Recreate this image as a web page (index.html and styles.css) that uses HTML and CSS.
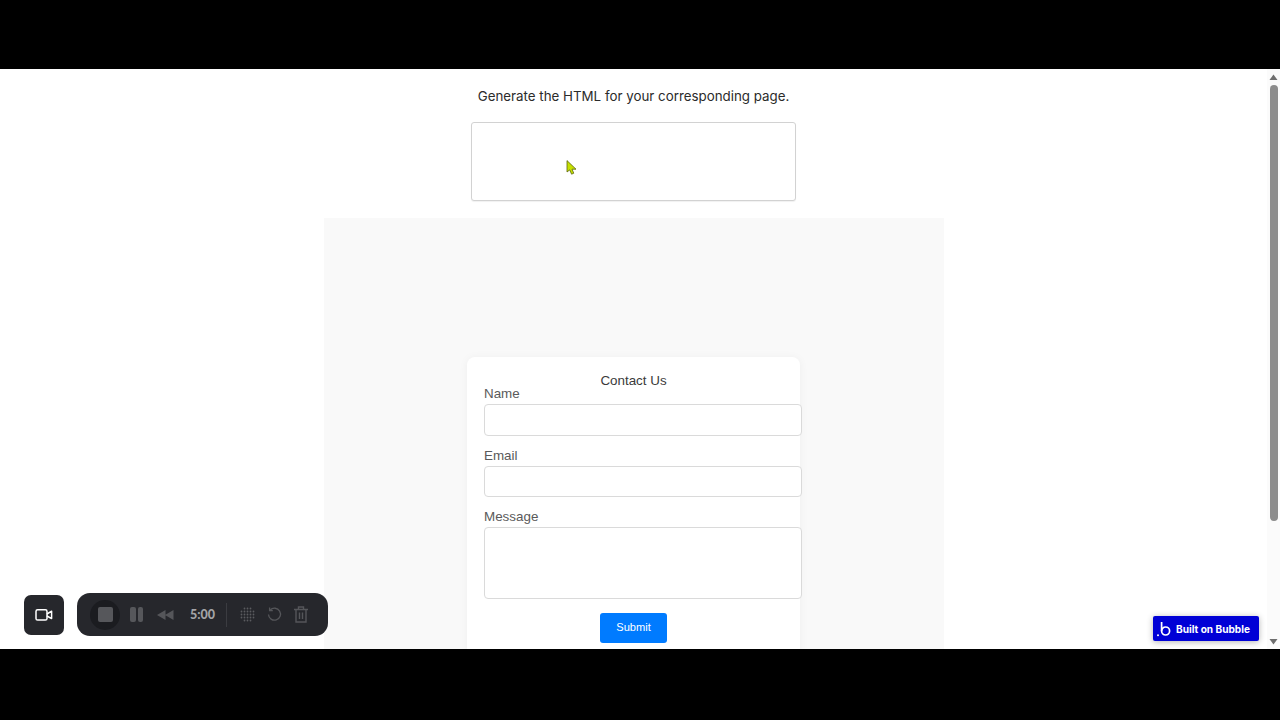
FILE: index.html
```html
<!DOCTYPE html>
<html lang="en">
<head>
<meta charset="utf-8">
<title>Generate HTML</title>
<link rel="stylesheet" href="styles.css">
</head>
<body>
<div class="screen">
  <div class="letterbox-top"></div>
  <div class="viewport">
    <main class="page">
      <p class="prompt">Generate the HTML for your corresponding page.</p>
      <div class="output-box"></div>
      <section class="preview">
        <form class="card">
          <h2 class="card-title">Contact Us</h2>
          <label class="field-label">Name</label>
          <div class="input"></div>
          <label class="field-label">Email</label>
          <div class="input"></div>
          <label class="field-label">Message</label>
          <div class="input textarea"></div>
          <div class="submit-row"><button class="submit" type="button">Submit</button></div>
        </form>
      </section>
    </main>
    <aside class="scrollbar">
      <svg class="arrow arrow-up" width="13" height="16" viewBox="0 0 13 16"><path d="M2.5 11 6.5 5.5 10.5 11z" fill="#6e6e6e"/></svg>
      <div class="track"><div class="thumb"></div></div>
      <svg class="arrow" width="13" height="15" viewBox="0 0 13 15"><path d="M2.5 5 6.5 10.5 10.5 5z" fill="#6e6e6e"/></svg>
    </aside>

    <svg class="cursor" width="11" height="15" viewBox="0 0 11 15"><path d="M1 .6 1 12 3.7 9.9 5.6 14.2 7.8 13.2 6 9.2 10 9.2z" fill="#c6e000" stroke="#5a6410" stroke-width=".8"/></svg>

    <div class="recorder">
      <div class="camera-btn">
        <svg width="18" height="14" viewBox="0 0 18 14" fill="none" stroke="#fff" stroke-width="1.5"><rect x="1" y="1.8" width="11" height="10.2" rx="1.6"/><path d="M12 6 16.6 3.2V10.6L12 8" stroke-linejoin="round"/></svg>
      </div>
      <div class="controls">
        <div class="stop-ring"><div class="stop"></div></div>
        <div class="pause"><span></span><span></span></div>
        <svg class="rewind" width="17" height="10" viewBox="0 0 17 10"><path d="M0 5 8.5 0V10zM8 5 16.5 0V10z" fill="#55565a"/></svg>
        <span class="time">5:00</span>
        <div class="divider"></div>
        <svg class="tool" width="15" height="15" viewBox="0 0 15 15" fill="#5a5b5f"><circle cx="4.5" cy="1.5" r=".9"/><circle cx="7.5" cy="1.5" r=".9"/><circle cx="10.5" cy="1.5" r=".9"/><circle cx="1.5" cy="4.5" r=".9"/><circle cx="4.5" cy="4.5" r=".9"/><circle cx="7.5" cy="4.5" r=".9"/><circle cx="10.5" cy="4.5" r=".9"/><circle cx="13.5" cy="4.5" r=".9"/><circle cx="1.5" cy="7.5" r=".9"/><circle cx="4.5" cy="7.5" r=".9"/><circle cx="7.5" cy="7.5" r=".9"/><circle cx="10.5" cy="7.5" r=".9"/><circle cx="13.5" cy="7.5" r=".9"/><circle cx="1.5" cy="10.5" r=".9"/><circle cx="4.5" cy="10.5" r=".9"/><circle cx="7.5" cy="10.5" r=".9"/><circle cx="10.5" cy="10.5" r=".9"/><circle cx="13.5" cy="10.5" r=".9"/><circle cx="4.5" cy="13.5" r=".9"/><circle cx="7.5" cy="13.5" r=".9"/><circle cx="10.5" cy="13.5" r=".9"/></svg>
        <svg class="tool" width="15" height="15" viewBox="0 0 15 15" fill="none" stroke="#55565a" stroke-width="1.3"><path d="M3.2 3A6 6 0 1 1 1.5 7.5"/><path d="M2.6 .6V3.6H5.8"/></svg>
        <svg class="tool" width="14" height="17" viewBox="0 0 14 17" fill="none" stroke="#55565a" stroke-width="1.4"><path d="M0 3.5H14M4.5 3.5V1H9.5V3.5M2 3.5V16H12V3.5M5.5 6.5V13M8.5 6.5V13"/></svg>
      </div>
    </div>

    <div class="badge">
      <svg width="14" height="16" viewBox="0 0 14 16" fill="none" stroke="#fff" stroke-width="1.7"><path d="M4.6 1V10.2"/><circle cx="8.6" cy="10" r="4"/><circle cx="1" cy="14.2" r="1" fill="#fff" stroke="none"/></svg>
      <span>Built on Bubble</span>
    </div>
  </div>
  <div class="letterbox-bottom"></div>
</div>
</body>
</html>
```
FILE: styles.css
```css
* { box-sizing: border-box; }
html, body { margin: 0; height: 100%; overflow: hidden; }
body { background: #000; font-family: "Liberation Sans", Arial, sans-serif; }
.screen { width: 1280px; height: 720px; display: flex; flex-direction: column; }
.letterbox-top { height: 69px; background: #000; flex: none; }
.letterbox-bottom { height: 71px; background: #000; flex: none; }
.viewport { flex: 1; display: flex; position: relative; overflow: hidden; background: #fff; }
.page { flex: 1; min-width: 0; display: flex; flex-direction: column; align-items: center; overflow: hidden; }
.prompt { margin: 18px 0 0; height: 18px; line-height: 18px; font-family: Inter, sans-serif; font-size: 13.33px; color: #2b2b2b; white-space: nowrap; }
.output-box { width: 325px; height: 79px; margin-top: 17px; background: #fff; border: 1px solid #d2d2d2; border-radius: 3px; box-shadow: 0 1px 1px rgba(0,0,0,.06); }
.preview { width: 620px; flex: 1; margin-top: 17px; background: #f9f9f9; padding-top: 139px; display: flex; flex-direction: column; align-items: center; overflow: hidden; }
.card { width: 333px; flex: none; height: 320px; background: #fff; border-radius: 8px; box-shadow: 0 1px 10px rgba(0,0,0,.05); padding: 16px 17px 0; color: #4e4e4e; }
.card-title { margin: 0; font-size: 13.4px; font-weight: 400; line-height: 16px; text-align: center; color: #3a3a3a; }
.field-label { display: block; font-size: 13.4px; line-height: 15px; height: 15px; margin-top: 12px; color: #5a5a5a; }
.card-title + .field-label { margin-top: -3px; }
.input { width: 318px; height: 31.5px; margin-top: 3px; background: #fff; border: 1px solid #dadada; border-radius: 4px; }
.textarea { height: 71.5px; }
.submit-row { display: flex; justify-content: center; margin-top: 14px; }
.submit { width: 67px; height: 30px; border: 0; padding: 0 0 2px; border-radius: 3px; background: #007bff; color: #fff; font-family: inherit; font-size: 11.1px; }
.scrollbar { width: 13px; flex: none; background: #fbfbfb; display: flex; flex-direction: column; }
.arrow { display: block; flex: none; }
.track { flex: 1; padding: 0 2.5px; }
.thumb { height: 436px; background: #8c8c8c; border-radius: 4px; }
.cursor { position: absolute; left: 566px; top: 91px; }
.recorder { position: absolute; left: 24px; top: 524px; display: flex; gap: 13px; align-items: center; }
.camera-btn { width: 40px; height: 40px; border-radius: 7px; background: #26272c; display: flex; align-items: center; justify-content: center; }
.controls { width: 251px; height: 43px; border-radius: 13px; background: #26272c; display: flex; align-items: center; padding-left: 13px; }
.stop-ring { width: 30px; height: 30px; border-radius: 50%; background: #1b1c20; display: flex; align-items: center; justify-content: center; flex: none; }
.stop { width: 15px; height: 15px; border-radius: 2px; background: #56575b; }
.pause { display: flex; gap: 2px; margin-left: 10px; flex: none; }
.pause span { width: 5.5px; height: 15px; border-radius: 2px; background: #56575b; }
.rewind { margin-left: 14px; flex: none; }
.time { margin-left: 16px; width: 24px; font-family: Lato, sans-serif; font-weight: 900; font-size: 12.5px; color: #a3a3a6; flex: none; }
.divider { width: 1px; height: 24px; background: #3b3c41; margin-left: 12px; flex: none; }
.tool { flex: none; margin-left: 12px; }
.divider + .tool { margin-left: 13px; }
.badge { position: absolute; left: 1153px; top: 547px; width: 106px; height: 25px; border-radius: 2px; background: #0000d6; box-shadow: 0 1px 6px rgba(0,0,0,.3); display: flex; align-items: center; gap: 5px; padding-left: 4px; color: #fff; font-family: Inter, sans-serif; font-weight: 700; font-size: 10.1px; white-space: nowrap; }
```
